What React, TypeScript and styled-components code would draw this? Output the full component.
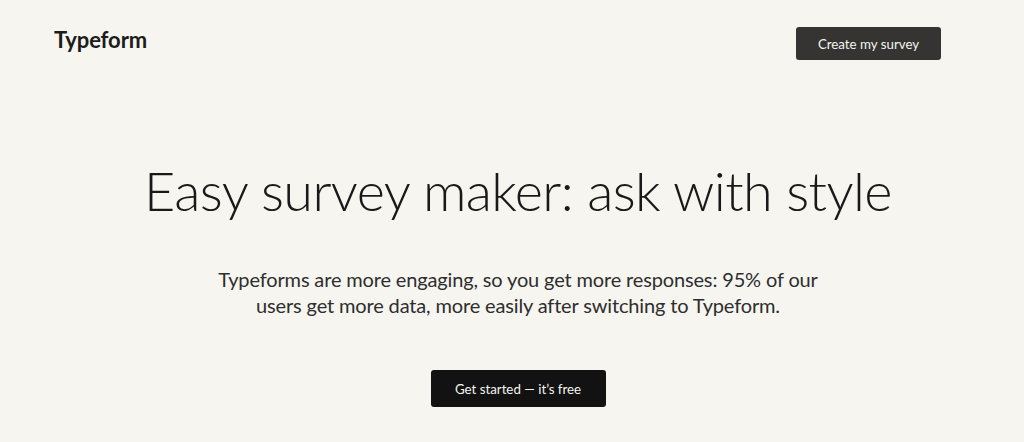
import React from 'react';
import styled, { createGlobalStyle } from 'styled-components';

const GlobalStyle = createGlobalStyle`
  html, body {
    margin: 0;
    padding: 0;
    background: #f6f5f0;
  }
  body {
    font-family: Lato, 'Noto Sans', sans-serif;
    -webkit-font-smoothing: antialiased;
  }
`;

const Page = styled.div`
  width: 1024px;
  height: 442px;
  background: #f6f5f0;
  display: flex;
  flex-direction: column;
  overflow: hidden;
`;

const Header = styled.header`
  display: flex;
  align-items: flex-start;
  justify-content: space-between;
  padding: 27px 83px 0 54px;
  height: 33px;
`;

const Logo = styled.div`
  font-family: Lato, sans-serif;
  font-size: 22px;
  line-height: 26px;
  font-weight: 700;
  color: #1c1c1c;
  letter-spacing: -0.1px;
`;

const Button = styled.button<{ $dark?: boolean }>`
  border: none;
  border-radius: 3px;
  background: ${(p) => (p.$dark ? '#121212' : '#353432')};
  color: #f4f4f0;
  font-family: Lato, sans-serif;
  font-size: 13.3px;
  font-weight: 400;
  cursor: pointer;
`;

const HeaderButton = styled(Button)`
  width: 145px;
  height: 33px;
`;

const Hero = styled.main`
  display: flex;
  flex-direction: column;
  align-items: center;
  padding: 99px 0 0 12px;
`;

const Title = styled.h1`
  margin: 0;
  font-family: Lato, sans-serif;
  font-size: 54px;
  font-weight: 300;
  line-height: 64px;
  letter-spacing: -0.6px;
  color: #191919;
`;

const Lead = styled.p`
  margin: 43px 0 0;
  width: 640px;
  text-align: center;
  font-family: Lato, sans-serif;
  font-size: 20px;
  font-weight: 400;
  line-height: 26px;
  letter-spacing: -0.15px;
  color: #2e2e2e;
`;

const CtaButton = styled(Button)`
  margin-top: 52px;
  width: 175px;
  height: 37px;
`;

export default function App() {
  return (
    <Page>
      <GlobalStyle />
      <Header>
        <Logo>Typeform</Logo>
        <HeaderButton>Create my survey</HeaderButton>
      </Header>
      <Hero>
        <Title>Easy survey maker: ask with style</Title>
        <Lead>
          Typeforms are more engaging, so you get more responses: 95% of our users get more data, more easily after
          switching to Typeform.
        </Lead>
        <CtaButton $dark>Get started — it’s free</CtaButton>
      </Hero>
    </Page>
  );
}
